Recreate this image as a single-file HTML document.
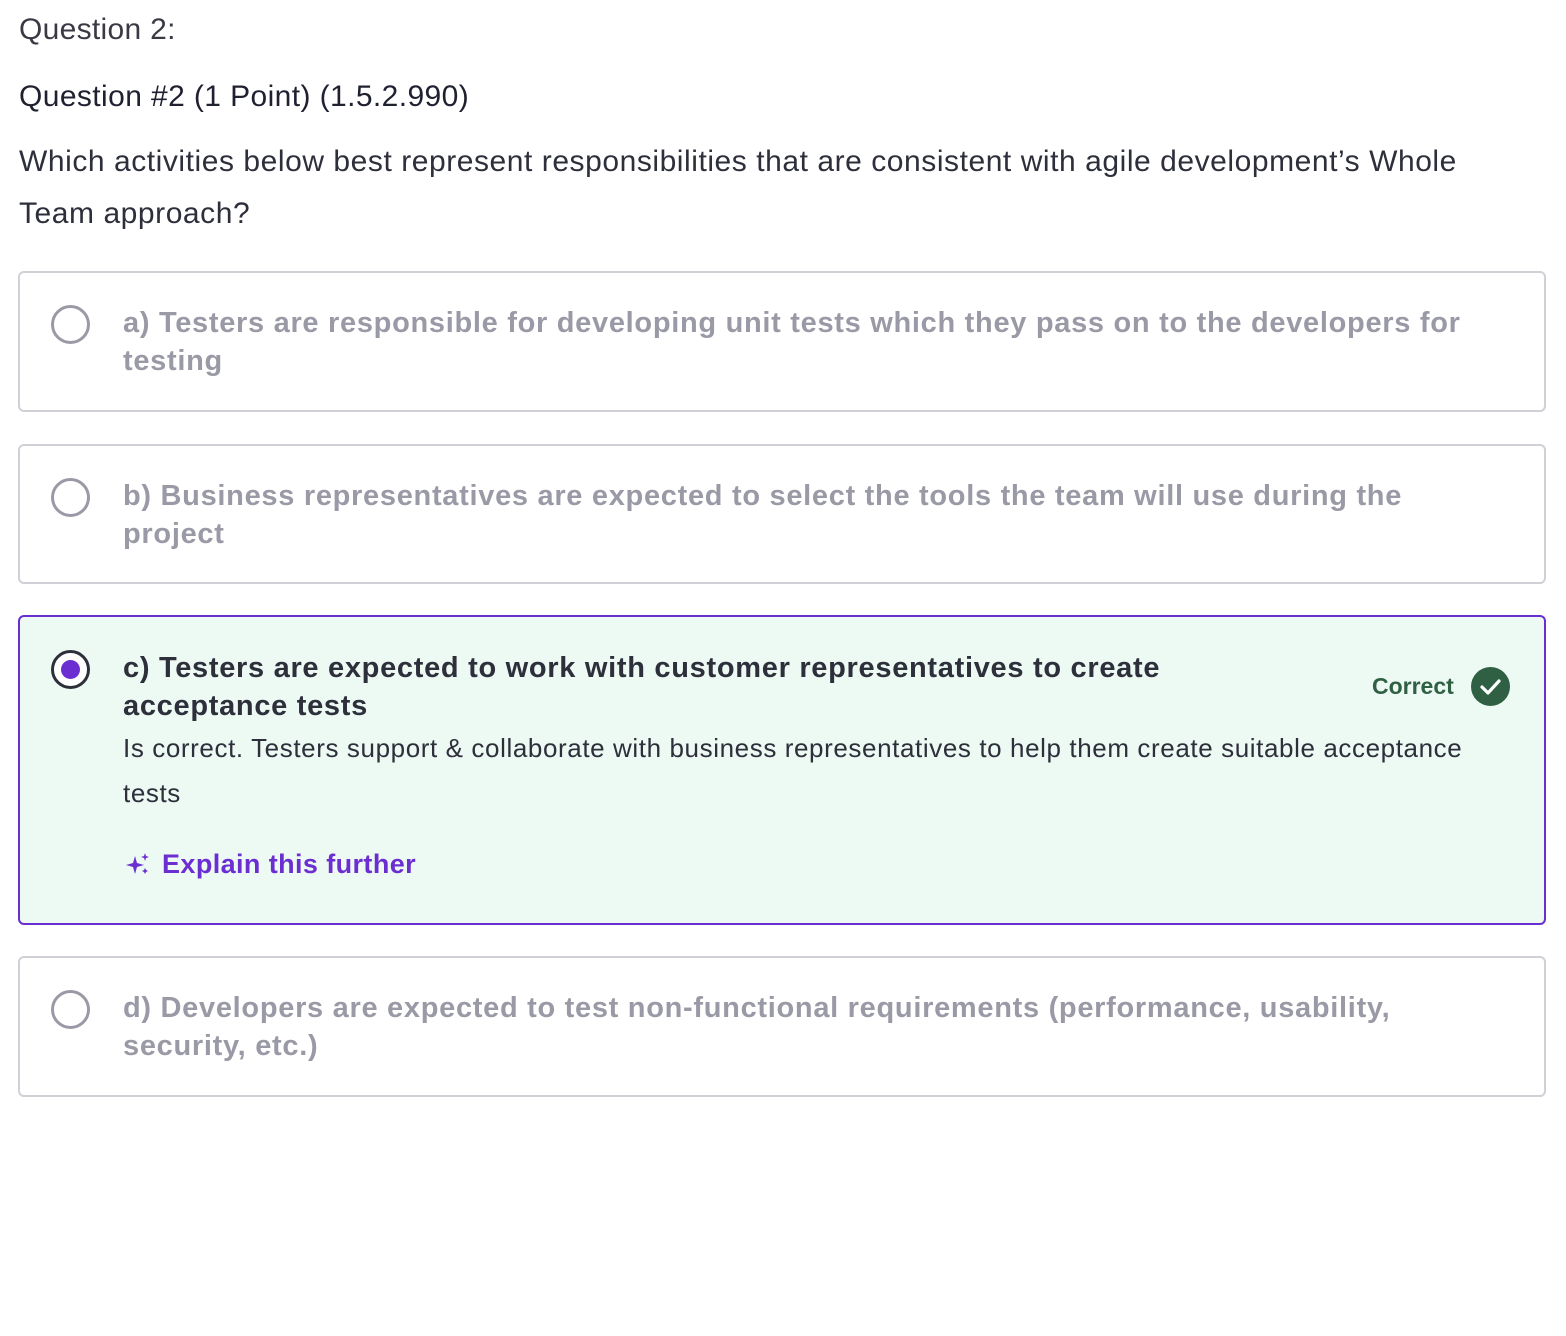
<!DOCTYPE html>
<html><head><meta charset="utf-8"><style>
body{margin:0;background:#fff;font-family:"Liberation Sans",sans-serif;color:#2d2f3b;width:1566px;height:1336px;overflow:hidden;position:relative}
.t{position:absolute;left:19px;white-space:nowrap}
.box{position:absolute;left:18px;width:1528px;border:2px solid #d1d0d6;border-radius:6px;box-sizing:border-box}
.radio{position:absolute;left:31px;width:39px;height:39px;border:3px solid #9a9aa6;border-radius:50%;box-sizing:border-box}
.opt{position:absolute;left:103px;width:1400px;font-size:29px;font-weight:bold;line-height:38px;color:#9a9aa6;letter-spacing:0.7px}
</style></head><body>
<div class="t" style="top:13px;font-size:30px;color:#3a3a44;letter-spacing:0.3px">Question 2:</div>
<div class="t" style="top:80px;font-size:30px;color:#1f2130;letter-spacing:0.4px">Question #2 (1 Point) (1.5.2.990)</div>
<div class="t" style="top:136px;font-size:30px;line-height:52px;color:#2d2f3b;letter-spacing:0.55px">Which activities below best represent responsibilities that are consistent with agile development’s Whole<br>Team approach?</div>

<div class="box" style="top:271px;height:141px">
<div class="radio" style="top:32px"></div>
<div class="opt" style="top:31px">a) Testers are responsible for developing unit tests which they pass on to the developers for<br>testing</div>
</div>
<div class="box" style="top:444px;height:140px">
<div class="radio" style="top:32px"></div>
<div class="opt" style="top:31px">b) Business representatives are expected to select the tools the team will use during the<br>project</div>
</div>
<div class="box" style="top:615px;height:310px;border-color:#6b2fd1;background:#edf9f3">
<div class="radio" style="top:33px;border-color:#2d2f3b;background:#fff"><div style="position:absolute;left:7px;top:7px;width:19px;height:19px;border-radius:50%;background:#6b2fd1"></div></div>
<div class="opt" style="top:32px;color:#2d2f3b;width:1150px">c) Testers are expected to work with customer representatives to create<br>acceptance tests</div>
<div style="position:absolute;left:103px;top:109px;font-size:26px;line-height:45px;color:#2d2f3b;width:1420px;letter-spacing:0.6px">Is correct. Testers support &amp; collaborate with business representatives to help them create suitable acceptance<br>tests</div>
<div style="position:absolute;left:106px;top:232px;font-size:27px;font-weight:bold;color:#6b2fd1;white-space:nowrap;letter-spacing:0.4px">
<svg width="24" height="24" viewBox="0 0 24 24" style="vertical-align:-3px;margin-right:12px"><path d="M9 4 L11 11 L18 13 L11 15 L9 22 L7 15 L0 13 L7 11Z" fill="#6b2fd1"/><path d="M19 1 L20 4 L23 5 L20 6 L19 9 L18 6 L15 5 L18 4Z" fill="#6b2fd1"/><path d="M19 16 L20 18 L22 19 L20 20 L19 22 L18 20 L16 19 L18 18Z" fill="#6b2fd1"/></svg>Explain this further</div>
<div style="position:absolute;left:1352px;top:56px;font-size:23px;font-weight:bold;color:#2f6043">Correct</div>
<div style="position:absolute;left:1451px;top:50px;width:39px;height:39px;border-radius:50%;background:#2f6043"><svg width="39" height="39" viewBox="0 0 39 39"><path d="M11 20 L17 26 L28 14" stroke="#fff" stroke-width="3.2" fill="none" stroke-linecap="round" stroke-linejoin="round"/></svg></div>
</div>
<div class="box" style="top:956px;height:141px">
<div class="radio" style="top:32px"></div>
<div class="opt" style="top:31px">d) Developers are expected to test non-functional requirements (performance, usability,<br>security, etc.)</div>
</div>
</body></html>
